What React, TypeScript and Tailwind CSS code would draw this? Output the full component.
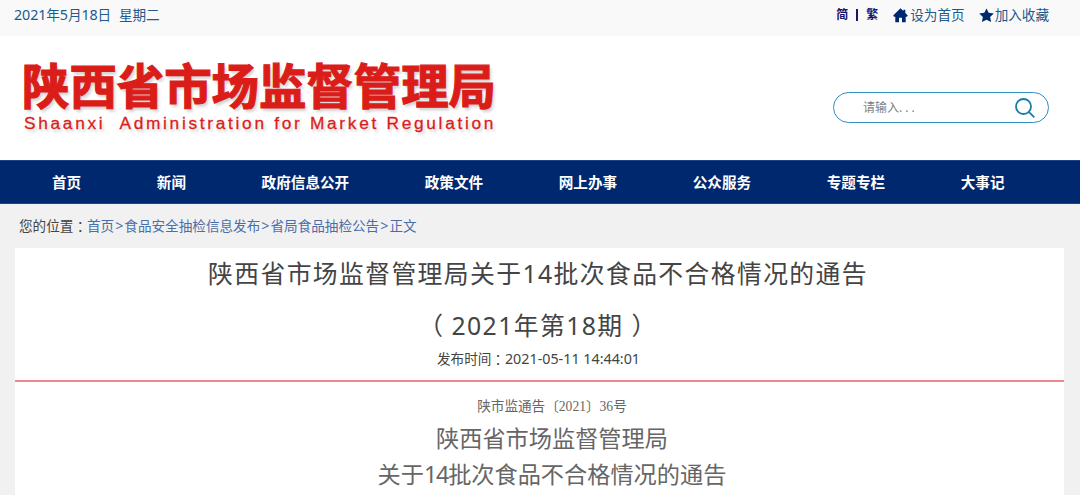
import { Fragment, type ReactNode } from 'react';

const NAV_ITEMS = [
  '首页',
  '新闻',
  '政府信息公开',
  '政策文件',
  '网上办事',
  '公众服务',
  '专题专栏',
  '大事记',
];

const BREADCRUMBS = ['首页', '食品安全抽检信息发布', '省局食品抽检公告', '正文'];

// full-width colon centred in its cell
function Colon() {
  return (
    <span className="inline-block font-['Noto_Sans_CJK_TC',sans-serif] leading-none align-[-1px]">
      ：
    </span>
  );
}

// latin digits run slightly larger than the CJK text beside them
function Num({ children }: { children: ReactNode }) {
  return <span className="text-[14.3px]">{children}</span>;
}

function HomeIcon() {
  return (
    <svg className="mr-0.5 h-[15px] w-[15px] shrink-0" viewBox="0 0 15 15" fill="#00286e">
      <path d="M7.5 0.2 0.2 7.6 1 8.7H2.3V14.2H6V9.8H9V14.2H12.7V8.7H14L14.8 7.6 12.3 5V1.8H10.4V3.1Z" />
    </svg>
  );
}

function StarIcon() {
  return (
    <svg className="mr-px h-[15px] w-[15px] shrink-0" viewBox="0 0 15 15" fill="#00286e">
      <path d="M7.5 0.4 9.7 4.8 14.8 5.5 11.1 9 12.1 14.1 7.5 11.7 2.9 14.1 3.9 9 0.2 5.5 5.3 4.8Z" />
    </svg>
  );
}

function TopBar() {
  return (
    <div className="flex h-9 justify-between bg-[#f9f9f9] pl-3.5 pr-[31px] text-[13.6px] leading-[30px] text-[#1c5a8c]">
      <div className="whitespace-pre tracking-[-0.1px]">
        <Num>2021</Num>年<Num>5</Num>月<Num>18</Num>日<span className="ml-2">星期二</span>
      </div>
      <div className="flex h-[30px] items-center">
        <span className="text-[12px] font-bold text-[#1b1464]">简</span>
        <span className="mx-[8px] h-3 w-[2px] bg-[#1b1464]" />
        <span className="mr-[15px] text-[12px] font-bold text-[#1b1464]">繁</span>
        <HomeIcon />
        <span className="mr-[14px]">设为首页</span>
        <StarIcon />
        <span>加入收藏</span>
      </div>
    </div>
  );
}

function Header() {
  return (
    <header className="flex h-[124px] justify-between bg-white pl-[22px] pr-[31px]">
      <div className="whitespace-nowrap pt-[23px] text-[#db1d1a] [text-shadow:2px_3px_3px_rgba(0,0,0,0.18)]">
        <div className="h-[53px] text-[47.4px] font-bold leading-[54px] [-webkit-text-stroke:1.2px_#db1d1a]">
          陕西省市场监督管理局
        </div>
        <div className="whitespace-pre pl-0.5 font-['Liberation_Sans',sans-serif] text-[17.3px] leading-[22px] tracking-[2.7px] [-webkit-text-stroke:0.3px_#db1d1a]">
          Shaanxi  Administration for Market Regulation
        </div>
      </div>
      <div className="mt-14 flex h-[31px] w-[216px] items-center justify-between rounded-full border border-[#2f8fbf] pl-[29px] pr-[13px]">
        <span className="text-[12px] text-[#808080]">
          请输入<span className="tracking-[3px]">...</span>
        </span>
        <svg className="h-5 w-5" viewBox="0 0 20 20" fill="none" stroke="#1d7aa5" strokeWidth="1.8">
          <circle cx="8.5" cy="8.5" r="7.5" />
          <path d="M13.8 13.8 19.3 19.3" />
        </svg>
      </div>
    </header>
  );
}

function NavBar() {
  return (
    <nav className="flex h-11 gap-[75.6px] border-y border-[#1d4287] bg-[#00286e] pl-[52px] text-[14.6px] font-bold leading-[42px] text-white">
      {NAV_ITEMS.map((item) => (
        <a key={item} className="whitespace-nowrap">
          {item}
        </a>
      ))}
    </nav>
  );
}

function Breadcrumb() {
  return (
    <div className="h-11 pl-[19px] text-[13.6px] leading-[43px] text-[#444]">
      您的位置
      <Colon />
      <span className="text-[#4a6ea9]">
        {BREADCRUMBS.map((crumb, index) => (
          <Fragment key={crumb}>
            {index > 0 && <span className="mx-px text-[14.3px]">&gt;</span>}
            <a>{crumb}</a>
          </Fragment>
        ))}
      </span>
    </div>
  );
}

function Heading({ children }: { children: ReactNode }) {
  return (
    <h1 className="h-[52px] whitespace-nowrap pr-[3px] text-[24.8px] leading-[51px] tracking-[1.4px]">
      {children}
    </h1>
  );
}

function Article() {
  return (
    <main className="ml-[15px] mr-4 h-[247px] bg-white text-center text-[#444]">
      <div className="h-[134px] border-b-2 border-[#f08a8a]">
        <Heading>陕西省市场监督管理局关于14批次食品不合格情况的通告</Heading>
        <Heading>
          <span className="mr-[7px]">（</span>2021年第18期<span className="ml-[8px]">）</span>
        </Heading>
        <div className="pr-0.5 text-[13.6px] leading-[13px]">
          发布时间
          <Colon />
          <Num>2021-05-11 14:44:01</Num>
        </div>
      </div>
      <div className="pt-3 pl-[25px] text-[#666]">
        <p className="font-['Liberation_Serif','Noto_Sans_CJK_SC',sans-serif] text-[13.6px] leading-[26px]">
          陕市监通告〔2021〕36号
        </p>
        <div className="text-[23.2px] leading-[36px]">
          <p>陕西省市场监督管理局</p>
          <p>
            关于<span className="tracking-[-1.2px]">14</span>批次食品不合格情况的通告
          </p>
        </div>
      </div>
    </main>
  );
}

export default function App() {
  return (
    <div className="h-[495px] w-[1080px] overflow-hidden bg-[#f1f1f1] font-['Noto_Sans','Noto_Sans_CJK_SC',sans-serif]">
      <TopBar />
      <Header />
      <NavBar />
      <Breadcrumb />
      <Article />
    </div>
  );
}
